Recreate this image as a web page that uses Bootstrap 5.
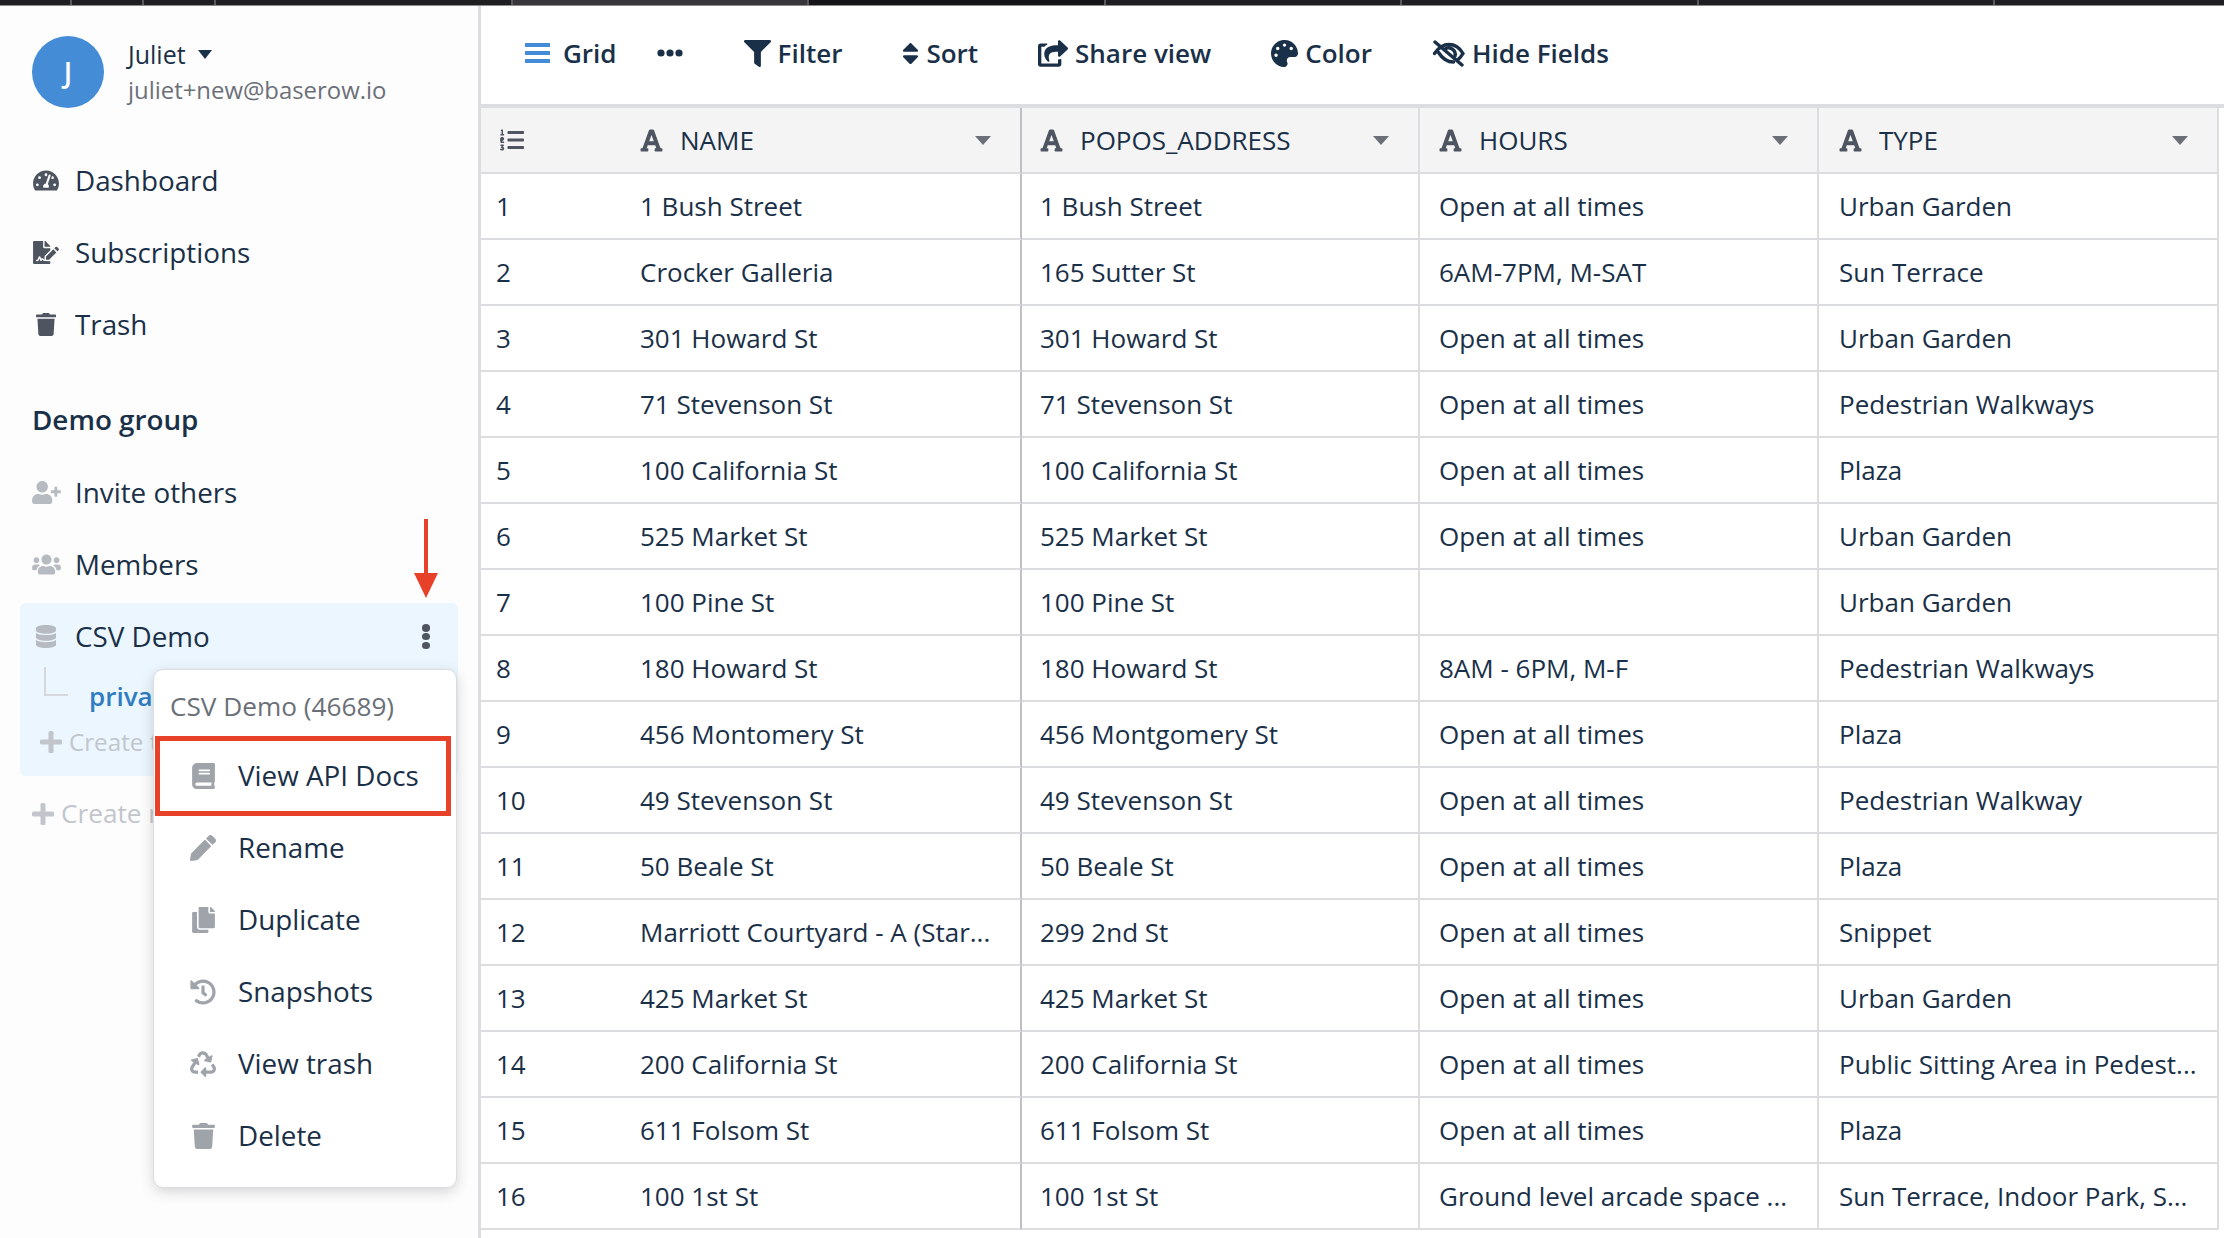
<!DOCTYPE html>
<html lang="en">
<head>
    <meta charset="UTF-8">
    <meta name="viewport" content="width=device-width, initial-scale=1.0">
    <title>Baserow - CSV Demo</title>
    <link href="https://cdn.jsdelivr.net/npm/bootstrap@5.3.0/dist/css/bootstrap.min.css" rel="stylesheet">
    <style>
        html, body {
            height: 100%;
            overflow: hidden;
        }
        body {
            font-family: "Open Sans", "Noto Sans", sans-serif;
            font-size: 26px;
            color: #1a3048;
            background-color: #fff;
        }
        .app-frame {
            height: 1238px;
        }
        /* browser tabs strip along the top edge */
        .tab-strip {
            height: 6px;
            background-color: #1f1f21;
            border-bottom: 1px solid #8d8d8f;
            flex-shrink: 0;
        }
        .tab-strip div {
            border-right: 2px solid #5a5a5c;
        }
        .tab-s { width: 72px; }
        .tab-l { width: 296.5px; }
        .tab-on { background-color: #38363a; }
        .tab-off { background-color: #151517; }

        .side-panel {
            width: 481px;
            flex-shrink: 0;
            background-color: #fdfdfd;
            border-right: 3px solid #dcdde1;
            padding: 30px 20px 0 20px;
        }
        .user-avatar {
            width: 72px;
            height: 72px;
            margin-left: 12px;
            background-color: #448dd6;
            color: #fff;
            font-size: 28px;
            font-weight: 600;
        }
        .user-name {
            font-size: 25px;
            line-height: 36px;
        }
        .user-mail {
            font-size: 23.9px;
            line-height: 36px;
            color: #6b7078;
        }
        .caret-down {
            display: inline-block;
            border-left: 7.5px solid transparent;
            border-right: 7.5px solid transparent;
            border-top: 9px solid #1a3048;
            margin-left: 12px;
            vertical-align: 5px;
        }
        .side-links {
            margin-top: 36px;
        }
        .side-link {
            height: 72px;
            padding-left: 12px;
            line-height: 72px;
            font-size: 27.8px;
        }
        .side-link svg {
            flex-shrink: 0;
        }
        .side-ico {
            width: 28px;
            margin-right: 15px;
            display: flex;
            justify-content: center;
            align-items: center;
        }
        .ico-dark { fill: #4f5560; }
        .ico-light { fill: #b6bac1; }
        .ico-mid { fill: #9fa3aa; }
        .ico-navy { fill: #1a3048; }
        .group-title {
            font-size: 27.8px;
            font-weight: 600;
            padding-left: 12px;
            margin-top: 29px;
            margin-bottom: 7px;
            line-height: 60px;
        }
        .db-block {
            height: 173px;
            margin-top: 3px;
            background-color: #ebf6ff;
            border-radius: 6px;
            position: relative;
        }
        .db-block .side-link {
            height: 66px;
            line-height: 66px;
        }
        .db-dots {
            position: absolute;
            right: 28px;
            top: 21px;
            width: 8px;
            height: 25px;
            display: flex;
            flex-direction: column;
            justify-content: space-between;
        }
        .db-dots span {
            width: 8px;
            height: 7.5px;
            border-radius: 50%;
            background-color: #4f5560;
        }
        .table-link {
            padding-left: 24px;
            height: 56px;
            margin-top: -1px;
            font-weight: 600;
            color: #2f7cc1;
            white-space: nowrap;
        }
        .tree-corner {
            width: 24px;
            height: 29px;
            border-left: 2px solid #d5d7db;
            border-bottom: 2px solid #d5d7db;
            margin-right: 21px;
            margin-top: -29px;
            flex-shrink: 0;
        }
        .create-link {
            color: #c2c6cc;
            white-space: nowrap;
        }
        .create-table {
            padding-left: 20px;
            font-size: 24.2px;
        }
        .create-new {
            margin-top: 18px;
            padding-left: 12px;
            font-size: 26.2px;
        }
        .create-link svg {
            margin-right: 7px;
            fill: #c2c6cc;
            flex-shrink: 0;
        }
        /* red arrow pointing at the dots */
        .note-arrow {
            position: absolute;
            left: 414px;
            top: 519px;
        }
        .db-menu {
            position: absolute;
            left: 153px;
            top: 669px;
            width: 304px;
            height: 519px;
            background-color: #fff;
            border: 1px solid #dcdde1;
            border-radius: 10px;
            box-shadow: 0 4px 14px rgba(0, 0, 0, .16);
        }
        .db-menu-head {
            padding: 18px 0 0 16px;
            height: 66px;
            font-size: 26.2px;
            line-height: 36px;
            color: #6b7078;
            white-space: nowrap;
        }
        .db-menu-row {
            height: 72px;
            padding-left: 36px;
            font-size: 27.8px;
        }
        .db-menu-row .side-ico {
            width: 26px;
            margin-right: 22px;
        }
        .db-menu-row.boxed {
            width: 296px;
            height: 80px;
            margin-left: 1px;
            margin-bottom: -4px;
            padding-left: 30px;
            border: 5px solid #e8412a;
        }

        .grid-panel {
            min-width: 0;
        }
        .view-bar {
            height: 102px;
            padding-left: 44px;
            padding-bottom: 4px;
            font-weight: 600;
            font-size: 26px;
            flex-shrink: 0;
            border-bottom: 4px solid #dcdde1;
        }
        .view-bar svg {
            margin-right: 7px;
        }
        .view-item {
            margin-right: 60px;
        }
        .view-item.item-grid {
            margin-right: 40px;
        }
        .view-item.item-grid svg {
            margin-right: 13px;
        }
        .view-item.item-dots {
            margin-right: 54px;
        }
        .grid-table {
            table-layout: fixed;
            width: 1738px;
            border-collapse: separate;
            border-spacing: 0;
        }
        .grid-table th, .grid-table td {
            height: 66px;
            padding: 0 15px 0 19px;
            font-weight: 400;
            border-bottom: 2px solid #dcdde1;
            border-right: 2px solid #dcdde1;
            white-space: nowrap;
            overflow: hidden;
            text-overflow: ellipsis;
            vertical-align: middle;
            color: #1a3048;
        }
        .grid-table th {
            background-color: #f4f4f4;
            font-size: 26px;
        }
        .grid-table .col-left {
            padding-left: 15px;
            padding-right: 0;
            border-right: 0;
        }
        .grid-table .col-name {
            padding-left: 17px;
            border-right: 2px solid #bcbfc5;
        }
        .grid-table .col-addr {
            padding-left: 18px;
        }
        .grid-table .col-type {
            padding-left: 20px;
        }
        .col-id { width: 142px; }
        .col-w-name { width: 399px; }
        .col-w-addr { width: 398px; }
        .col-w-hours { width: 399px; }
        .col-w-type { width: 400px; }
        .head-cell {
            justify-content: space-between;
        }
        .head-cell svg {
            margin-right: 17px;
        }
        .head-caret {
            border-left: 8px solid transparent;
            border-right: 8px solid transparent;
            border-top: 9px solid #6b7078;
            margin-right: 14px;
        }
        .row-count-ico {
            margin-left: 3px;
        }
    </style>
</head>
<body>
    <svg width="0" height="0" class="position-absolute">
        <defs>
            <symbol id="i-gauge" viewBox="0 0 576 512"><path d="M288 32C128.94 32 0 160.94 0 320c0 52.8 14.25 102.26 39.06 144.8 5.61 9.62 16.3 15.2 27.44 15.2h443c11.14 0 21.83-5.58 27.44-15.2C561.75 422.26 576 372.8 576 320c0-159.06-128.94-288-288-288zm0 64c14.71 0 26.58 10.13 30.32 23.65-1.11 2.26-2.64 4.23-3.45 6.67l-9.22 27.67c-5.13 3.49-10.97 6.01-17.64 6.01-17.67 0-32-14.33-32-32S270.33 96 288 96zM96 384c-17.67 0-32-14.33-32-32s14.33-32 32-32 32 14.33 32 32-14.33 32-32 32zm48-160c-17.67 0-32-14.33-32-32s14.33-32 32-32 32 14.33 32 32-14.33 32-32 32zm246.77-72.41l-61.33 184C343.13 347.33 352 364.54 352 384c0 11.72-3.38 22.55-8.88 32H232.88c-5.5-9.45-8.88-20.28-8.88-32 0-33.94 26.5-61.43 59.9-63.59l61.34-184.01c4.17-12.56 17.73-19.45 30.36-15.17 12.57 4.19 19.35 17.79 15.17 30.36zm14.66 57.2l15.52-46.55c3.47-1.29 7.13-2.23 11.05-2.23 17.67 0 32 14.33 32 32s-14.33 32-32 32c-11.38-.01-20.89-6.28-26.57-15.22zM480 384c-17.67 0-32-14.33-32-32s14.33-32 32-32 32 14.33 32 32-14.33 32-32 32z"/></symbol>
            <symbol id="i-sign" viewBox="0 0 576 512"><path d="M218.17 424.14c-2.95-5.92-8.09-6.52-10.17-6.52s-7.22.59-10.02 6.19l-7.67 15.34c-6.37 12.78-25.03 11.37-29.48-2.09L144 386.59l-10.61 31.88c-5.89 17.66-22.38 29.53-41 29.53H80c-8.84 0-16-7.16-16-16s7.16-16 16-16h12.39c4.83 0 9.11-3.08 10.64-7.66l18.19-54.64c3.3-9.81 12.44-16.41 22.78-16.41s19.48 6.59 22.77 16.41l13.88 41.64c19.75-16.19 54.06-9.7 66 14.16 1.89 3.78 5.49 5.95 9.36 6.26v-82.12l128-127.09V160H248c-13.2 0-24-10.8-24-24V0H24C10.7 0 0 10.7 0 24v464c0 13.3 10.7 24 24 24h336c13.3 0 24-10.7 24-24v-40l-128-.11c-16.12-.31-30.58-9.28-37.83-23.75zM384 121.9c0-6.3-2.5-12.4-7-16.9L279.1 7c-4.5-4.5-10.6-7-17-7H256v128h128v-6.1zm-96 225.06V416h68.99l161.68-162.78-67.88-67.88L288 346.96zm280.54-179.63l-31.87-31.87c-9.94-9.94-26.07-9.94-36.01 0l-27.25 27.25 67.88 67.88 27.25-27.25c9.95-9.94 9.95-26.07 0-36.01z"/></symbol>
            <symbol id="i-trash" viewBox="0 0 448 512"><path d="M432 32H312l-9.4-18.7A24 24 0 0 0 281.1 0H166.8a23.72 23.72 0 0 0-21.4 13.3L136 32H16A16 16 0 0 0 0 48v32a16 16 0 0 0 16 16h416a16 16 0 0 0 16-16V48a16 16 0 0 0-16-16zM53.2 467a48 48 0 0 0 47.9 45h245.8a48 48 0 0 0 47.9-45L416 128H32z"/></symbol>
            <symbol id="i-user-plus" viewBox="0 0 640 512"><path d="M624 208h-64v-64c0-8.8-7.2-16-16-16h-32c-8.8 0-16 7.2-16 16v64h-64c-8.8 0-16 7.2-16 16v32c0 8.8 7.2 16 16 16h64v64c0 8.8 7.2 16 16 16h32c8.8 0 16-7.2 16-16v-64h64c8.8 0 16-7.2 16-16v-32c0-8.8-7.2-16-16-16zm-400 48c70.7 0 128-57.3 128-128S294.7 0 224 0 96 57.3 96 128s57.3 128 128 128zm89.6 32h-16.7c-22.2 10.2-46.9 16-72.9 16s-50.6-5.8-72.9-16h-16.7C60.2 288 0 348.2 0 422.4V464c0 26.5 21.5 48 48 48h352c26.5 0 48-21.5 48-48v-41.6c0-74.2-60.2-134.4-134.4-134.4z"/></symbol>
            <symbol id="i-users" viewBox="0 0 640 512"><path d="M96 224c35.3 0 64-28.7 64-64s-28.7-64-64-64-64 28.7-64 64 28.7 64 64 64zm448 0c35.3 0 64-28.7 64-64s-28.7-64-64-64-64 28.7-64 64 28.7 64 64 64zm32 32h-64c-17.6 0-33.5 7.1-45.1 18.6 40.3 22.1 68.9 62 75.1 109.4h66c17.7 0 32-14.3 32-32v-32c0-35.3-28.7-64-64-64zm-256 0c61.9 0 112-50.1 112-112S381.9 32 320 32 208 82.1 208 144s50.1 112 112 112zm76.8 32h-8.3c-20.8 10-43.9 16-68.5 16s-47.6-6-68.5-16h-8.3C179.6 288 128 339.6 128 403.2V432c0 26.5 21.5 48 48 48h288c26.5 0 48-21.5 48-48v-28.8c0-63.6-51.6-115.2-115.2-115.2zm-223.7-13.4C161.5 263.1 145.6 256 128 256H64c-35.3 0-64 28.7-64 64v32c0 17.7 14.3 32 32 32h65.9c6.3-47.4 34.9-87.3 75.2-109.4z"/></symbol>
            <symbol id="i-db" viewBox="0 0 448 512"><path d="M448 73.143v45.714C448 159.143 347.667 192 224 192S0 159.143 0 118.857V73.143C0 32.857 100.333 0 224 0s224 32.857 224 73.143zM448 176v102.857C448 319.143 347.667 352 224 352S0 319.143 0 278.857V176c48.125 33.143 136.208 48.572 224 48.572S399.874 209.143 448 176zm0 160v102.857C448 479.143 347.667 512 224 512S0 479.143 0 438.857V336c48.125 33.143 136.208 48.572 224 48.572S399.874 369.143 448 336z"/></symbol>
            <symbol id="i-book" viewBox="0 0 448 512"><path d="M448 360V24c0-13.3-10.7-24-24-24H96C43 0 0 43 0 96v320c0 53 43 96 96 96h328c13.3 0 24-10.7 24-24v-16c0-7.5-3.5-14.3-8.9-18.7-4.2-15.4-4.2-59.3 0-74.7 5.4-4.3 8.9-11.1 8.9-18.6zM128 134c0-3.3 2.7-6 6-6h212c3.3 0 6 2.7 6 6v20c0 3.3-2.7 6-6 6H134c-3.3 0-6-2.7-6-6v-20zm0 64c0-3.3 2.7-6 6-6h212c3.3 0 6 2.7 6 6v20c0 3.3-2.7 6-6 6H134c-3.3 0-6-2.7-6-6v-20zm253.4 250H96c-17.7 0-32-14.3-32-32 0-17.6 14.4-32 32-32h285.4c-1.9 17.1-1.9 46.9 0 64z"/></symbol>
            <symbol id="i-pencil" viewBox="0 0 512 512"><path d="M497.9 142.1l-46.1 46.1c-4.7 4.7-12.3 4.7-17 0l-111-111c-4.7-4.7-4.7-12.3 0-17l46.1-46.1c18.7-18.7 49.1-18.7 67.9 0l60.1 60.1c18.8 18.7 18.8 49.1 0 67.9zM284.2 99.8L21.6 362.4.4 483.9c-2.9 16.4 11.4 30.6 27.8 27.8l121.5-21.3 262.6-262.6c4.7-4.7 4.7-12.3 0-17l-111-111c-4.8-4.7-12.4-4.7-17.1 0z"/></symbol>
            <symbol id="i-copy" viewBox="0 0 448 512"><path d="M320 448v40c0 13.255-10.745 24-24 24H24c-13.255 0-24-10.745-24-24V120c0-13.255 10.745-24 24-24h72v296c0 30.879 25.121 56 56 56h168zm0-344V0H152c-13.255 0-24 10.745-24 24v368c0 13.255 10.745 24 24 24h272c13.255 0 24-10.745 24-24V128H344c-13.2 0-24-10.8-24-24zm120.971-31.029L375.029 7.029A24 24 0 0 0 358.059 0H352v96h96v-6.059a24 24 0 0 0-7.029-16.97z"/></symbol>
            <symbol id="i-history" viewBox="0 0 512 512"><path d="M504 255.531c.253 136.64-111.18 248.372-247.82 248.468-59.015.042-113.223-20.53-155.822-54.911-11.077-8.94-11.905-25.541-1.839-35.607l11.267-11.267c8.609-8.609 22.353-9.551 31.891-1.984C173.062 425.135 212.781 440 256 440c101.705 0 184-82.311 184-184 0-101.705-82.311-184-184-184-48.814 0-93.149 18.969-126.068 49.932l50.754 50.754c10.08 10.08 2.941 27.314-11.313 27.314H24c-8.837 0-16-7.163-16-16V38.627c0-14.254 17.234-21.393 27.314-11.314l49.372 49.372C129.209 34.136 189.552 8 256 8c136.81 0 247.747 110.78 248 247.531zm-180.912 78.784l9.823-12.63c8.138-10.463 6.253-25.542-4.21-33.679L288 256.349V152c0-13.255-10.745-24-24-24h-16c-13.255 0-24 10.745-24 24v135.651l65.409 50.874c10.463 8.137 25.541 6.253 33.679-4.21z"/></symbol>
            <symbol id="i-recycle" viewBox="0 0 512 512"><path d="M184.561 261.903c3.232 13.997-12.123 24.635-24.068 17.168l-40.736-25.455-50.867 81.402C55.606 356.273 70.96 384 96.012 384H148c6.627 0 12 5.373 12 12v40c0 6.627-5.373 12-12 12H96.115c-75.334 0-121.302-83.048-81.408-146.88l50.822-81.388-40.725-25.448c-12.081-7.547-8.966-25.961 4.879-29.158l110.237-25.45c8.611-1.988 17.201 3.381 19.189 11.99l25.452 110.237zm98.561-182.915l41.289 66.076-40.74 25.457c-12.051 7.528-9 25.953 4.879 29.158l110.237 25.45c8.672 1.999 17.215-3.438 19.189-11.99l25.45-110.237c3.197-13.844-11.99-24.719-24.068-17.168l-40.687 25.424-41.263-66.082C297.074-10.286 202.918-9.5 165.124 51.015l-22.634 36.24c-3.51 5.62-1.8 13.019 3.82 16.53l33.931 21.19c5.62 3.51 13.019 1.8 16.53-3.82l22.634-36.24c12.506-20.017 41.876-19.8 54.017.073zM497.288 301.12l-27.365-43.837c-3.51-5.62-10.909-7.33-16.53-3.82l-33.931 21.19c-5.62 3.51-7.33 10.909-3.82 16.53l27.377 43.812C456.394 356.304 441.006 384 415.987 384H320v-48c0-14.214-17.23-21.403-27.314-11.314l-80 80c-6.248 6.248-6.248 16.379 0 22.627l80 80C302.689 517.316 320 510.216 320 496v-48h95.88c75.274 0 121.335-82.997 81.408-146.88z"/></symbol>
            <symbol id="i-filter" viewBox="0 0 512 512"><path d="M487.976 0H24.028C2.71 0-8.047 25.866 7.058 40.971L192 225.941V432c0 7.831 3.821 15.17 10.237 19.662l80 55.98C298.02 518.69 320 507.493 320 487.98V225.941l184.947-184.97C520.021 25.896 509.338 0 487.976 0z"/></symbol>
            <symbol id="i-sort" viewBox="0 0 320 512"><path d="M41 288h238c21.4 0 32.1 25.9 17 41L177 448c-9.4 9.4-24.6 9.4-33.9 0L24 329c-15.1-15.1-4.4-41 17-41zm255-105L177 64c-9.4-9.4-24.6-9.4-33.9 0L24 183c-15.1 15.1-4.4 41 17 41h238c21.4 0 32.1-25.9 17-41z"/></symbol>
            <symbol id="i-share" viewBox="0 0 576 512"><path d="M568.482 177.448L424.479 313.433C409.3 327.768 384 317.14 384 295.985v-71.963c-144.575.97-205.566 35.113-164.775 171.353 4.483 14.973-12.846 26.567-25.006 17.33C155.252 383.105 120 326.488 120 269.339c0-143.937 117.599-172.5 264-173.312V24.012c0-21.174 25.317-31.768 40.479-17.448l144.003 135.988c10.02 9.463 10.028 25.425 0 34.896zM384 379.128V448H64V128h50.916a11.99 11.99 0 0 0 8.646-3.683c14.953-15.59 32.237-27.931 51.007-37.78C186.708 80.17 182.213 64 168.503 64H48C21.49 64 0 85.49 0 112v352c0 26.51 21.49 48 48 48h352c26.51 0 48-21.49 48-48v-88.806c0-8.288-8.197-14.066-16.011-11.302a71.83 71.83 0 0 1-34.189 3.377c-7.27-1.046-13.8 4.514-13.8 11.859z"/></symbol>
            <symbol id="i-palette" viewBox="0 0 512 512"><path d="M204.3 5C104.9 24.4 24.8 104.3 5.2 203.4c-37 187 131.7 326.4 258.8 306.7 41.2-6.4 61.4-54.6 42.5-91.7-23.1-45.4 9.9-98.4 60.9-98.4h79.7c35.8 0 64.8-29.6 64.9-65.3C511.5 97.1 368.1-26.9 204.3 5zM96 320c-17.7 0-32-14.3-32-32s14.3-32 32-32 32 14.3 32 32-14.3 32-32 32zm32-128c-17.7 0-32-14.3-32-32s14.3-32 32-32 32 14.3 32 32-14.3 32-32 32zm128-64c-17.7 0-32-14.3-32-32s14.3-32 32-32 32 14.3 32 32-14.3 32-32 32zm128 64c-17.7 0-32-14.3-32-32s14.3-32 32-32 32 14.3 32 32-14.3 32-32 32z"/></symbol>
            <symbol id="i-font" viewBox="0 0 448 512"><path d="M432 416h-23.41L277.88 53.69A32 32 0 0 0 247.58 32h-47.16a32 32 0 0 0-30.3 21.69L39.41 416H16a16 16 0 0 0-16 16v32a16 16 0 0 0 16 16h128a16 16 0 0 0 16-16v-32a16 16 0 0 0-16-16h-19.58l23.3-64h152.56l23.3 64H304a16 16 0 0 0-16 16v32a16 16 0 0 0 16 16h128a16 16 0 0 0 16-16v-32a16 16 0 0 0-16-16zM176.85 272L224 142.51 271.15 272z"/></symbol>
            <symbol id="i-list" viewBox="0 0 512 512"><path d="M61.77 401l17.5-20.15a19.92 19.92 0 0 0 5.07-14.19v-3.31C84.34 356 80.5 352 73 352H16a8 8 0 0 0-8 8v16a8 8 0 0 0 8 8h22.83a157.41 157.41 0 0 0-11 12.31l-5.61 7c-4 5.07-5.25 10.13-2.8 14.88l1.05 1.93c3 5.76 6.29 7.88 12.25 7.88h4.73c10.33 0 15.94 2.44 15.94 9.09 0 4.72-4.2 8.22-14.36 8.22a41.54 41.54 0 0 1-15.47-3.12c-6.49-3.88-11.74-3.5-15.6 3.12l-5.59 9.31c-3.72 6.13-3.19 11.72 2.63 15.94 7.71 4.69 20.38 9.44 37 9.44 34.16 0 48.5-22.75 48.5-44.12-.03-14.38-9.12-29.76-28.73-34.88zM496 224H176a16 16 0 0 0-16 16v32a16 16 0 0 0 16 16h320a16 16 0 0 0 16-16v-32a16 16 0 0 0-16-16zm0-160H176a16 16 0 0 0-16 16v32a16 16 0 0 0 16 16h320a16 16 0 0 0 16-16V80a16 16 0 0 0-16-16zm0 320H176a16 16 0 0 0-16 16v32a16 16 0 0 0 16 16h320a16 16 0 0 0 16-16v-32a16 16 0 0 0-16-16zM16 160h64a8 8 0 0 0 8-8v-16a8 8 0 0 0-8-8H64V40a8 8 0 0 0-8-8H32a8 8 0 0 0-7.14 4.42l-8 16A8 8 0 0 0 24 64h8v64H16a8 8 0 0 0-8 8v16a8 8 0 0 0 8 8zm-3.91 160H80a8 8 0 0 0 8-8v-16a8 8 0 0 0-8-8H41.32c3.29-10.29 48.34-18.68 48.34-56.44 0-29.06-25-39.56-44.47-39.56-21.36 0-33.8 10-40.46 18.75-4.37 5.59-3 10.84 2.8 15.37l8.58 6.88c5.61 4.56 11 2.47 16.12-2.44a13.44 13.44 0 0 1 9.46-3.84c3.33 0 9.28 1.56 9.28 8.75C51 200.6 0 210.6 0 268v4c0 9 6.09 16 12.09 16z"/></symbol>
            <symbol id="i-plus" viewBox="0 0 22 22"><rect x="8.500" width="5" height="22" rx="1.500"/><rect y="8.500" width="22" height="5" rx="1.500"/></symbol>
        </defs>
    </svg>

    <div class="app-frame d-flex flex-column position-relative">
        <div class="tab-strip d-flex">
            <div class="tab-s"></div>
            <div class="tab-s"></div>
            <div class="tab-s"></div>
            <div class="tab-l"></div>
            <div class="tab-l tab-on"></div>
            <div class="tab-l tab-off"></div>
            <div class="tab-l"></div>
            <div class="tab-l"></div>
            <div class="tab-l"></div>
        </div>
        <div class="d-flex flex-grow-1 overflow-hidden">
            <aside class="side-panel">
                <div class="d-flex align-items-center">
                    <div class="user-avatar rounded-circle d-flex align-items-center justify-content-center flex-shrink-0">J</div>
                    <div class="ms-4">
                        <div class="user-name">Juliet<span class="caret-down"></span></div>
                        <div class="user-mail">juliet+new@baserow.io</div>
                    </div>
                </div>
                <div class="side-links">
                    <div class="side-link d-flex align-items-center"><span class="side-ico"><svg width="26" height="23" class="ico-dark"><use href="#i-gauge"/></svg></span>Dashboard</div>
                    <div class="side-link d-flex align-items-center"><span class="side-ico"><svg width="26" height="23" class="ico-dark"><use href="#i-sign"/></svg></span>Subscriptions</div>
                    <div class="side-link d-flex align-items-center"><span class="side-ico"><svg width="20" height="23" class="ico-dark"><use href="#i-trash"/></svg></span>Trash</div>
                </div>
                <div class="group-title">Demo group</div>
                <div class="side-link d-flex align-items-center"><span class="side-ico"><svg width="29" height="23" class="ico-light"><use href="#i-user-plus"/></svg></span>Invite others</div>
                <div class="side-link d-flex align-items-center"><span class="side-ico"><svg width="29" height="23" class="ico-light"><use href="#i-users"/></svg></span>Members</div>
                <div class="db-block">
                    <div class="side-link d-flex align-items-center"><span class="side-ico"><svg width="20" height="23" class="ico-light"><use href="#i-db"/></svg></span>CSV Demo</div>
                    <div class="db-dots"><span></span><span></span><span></span></div>
                    <div class="table-link d-flex align-items-center"><span class="tree-corner"></span>private</div>
                    <div class="create-link create-table d-flex align-items-center"><svg width="22" height="22"><use href="#i-plus"/></svg>Create table</div>
                </div>
                <div class="create-link create-new d-flex align-items-center"><svg width="22" height="22"><use href="#i-plus"/></svg>Create new</div>
            </aside>

            <main class="grid-panel flex-grow-1 d-flex flex-column">
                <div class="view-bar d-flex align-items-center">
                    <div class="view-item item-grid d-flex align-items-center">
                        <svg width="25" height="22" viewBox="0 0 25 22" fill="#448dd6"><rect width="25" height="4" y="1"/><rect width="25" height="4" y="9"/><rect width="25" height="4" y="17"/></svg>
                        <span>Grid</span>
                    </div>
                    <div class="view-item item-dots d-flex align-items-center">
                        <svg width="26" height="8" viewBox="0 0 26 8" class="ico-navy"><circle cx="4" cy="4" r="3.6"/><circle cx="13" cy="4" r="3.6"/><circle cx="22" cy="4" r="3.6"/></svg>
                    </div>
                    <div class="view-item d-flex align-items-center">
                        <svg width="27" height="27" class="ico-navy"><use href="#i-filter"/></svg>Filter
                    </div>
                    <div class="view-item d-flex align-items-center">
                        <svg width="17" height="27" class="ico-navy"><use href="#i-sort"/></svg>Sort
                    </div>
                    <div class="view-item d-flex align-items-center">
                        <svg width="30" height="27" class="ico-navy"><use href="#i-share"/></svg>Share view
                    </div>
                    <div class="view-item d-flex align-items-center">
                        <svg width="27" height="27" class="ico-navy"><use href="#i-palette"/></svg>Color
                    </div>
                    <div class="view-item d-flex align-items-center">
                        <svg width="33" height="27" viewBox="0 0 33 27" fill="none" stroke="#1a3048" stroke-width="3.4" stroke-linecap="round"><path d="M2.500 13.500C7 7 12 4.500 17 4.500c5.500 0 10.500 3 14 9-1.500 2.600-3.300 4.700-5.200 6.300"/><path d="M6.500 12.500c3.500 5.500 7.800 9.500 15 9.500"/><path d="M12.500 9.500a6.500 6.500 0 0 1 10.500 6.500"/><path d="M3 2l27 23"/></svg>Hide Fields
                    </div>
                </div>
                <div class="flex-grow-1 overflow-hidden">
                    <table class="grid-table" id="gridTable">
                        <colgroup>
                            <col class="col-id"><col class="col-w-name"><col class="col-w-addr"><col class="col-w-hours"><col class="col-w-type">
                        </colgroup>
                        <thead>
                            <tr>
                                <th class="col-left"><svg width="26" height="24" class="ico-dark row-count-ico d-block"><use href="#i-list"/></svg></th>
                                <th class="col-name" id="headName"></th>
                                <th class="col-addr" id="headAddr"></th>
                                <th id="headHours"></th>
                                <th class="col-type" id="headType"></th>
                            </tr>
                        </thead>
                        <tbody id="gridRows"></tbody>
                    </table>
                </div>
            </main>
        </div>

        <svg class="note-arrow" width="24" height="80" viewBox="0 0 24 80" fill="#e8412a"><rect x="10" y="0" width="4" height="56"/><path d="M0 54h24L12 79z"/></svg>

        <div class="db-menu">
            <div class="db-menu-head">CSV Demo (46689)</div>
            <div class="db-menu-row boxed d-flex align-items-center"><span class="side-ico"><svg width="23" height="26" class="ico-mid"><use href="#i-book"/></svg></span>View API Docs</div>
            <div class="db-menu-row d-flex align-items-center"><span class="side-ico"><svg width="26" height="26" class="ico-mid"><use href="#i-pencil"/></svg></span>Rename</div>
            <div class="db-menu-row d-flex align-items-center"><span class="side-ico"><svg width="23" height="26" class="ico-mid"><use href="#i-copy"/></svg></span>Duplicate</div>
            <div class="db-menu-row d-flex align-items-center"><span class="side-ico"><svg width="26" height="26" class="ico-mid"><use href="#i-history"/></svg></span>Snapshots</div>
            <div class="db-menu-row d-flex align-items-center"><span class="side-ico"><svg width="26" height="26" class="ico-mid"><use href="#i-recycle"/></svg></span>View trash</div>
            <div class="db-menu-row d-flex align-items-center"><span class="side-ico"><svg width="23" height="26" class="ico-mid"><use href="#i-trash"/></svg></span>Delete</div>
        </div>
    </div>

    <script src="https://cdn.jsdelivr.net/npm/bootstrap@5.3.0/dist/js/bootstrap.bundle.min.js"></script>
    <script>
        const rows = [
            ['1 Bush Street', '1 Bush Street', 'Open at all times', 'Urban Garden'],
            ['Crocker Galleria', '165 Sutter St', '6AM-7PM, M-SAT', 'Sun Terrace'],
            ['301 Howard St', '301 Howard St', 'Open at all times', 'Urban Garden'],
            ['71 Stevenson St', '71 Stevenson St', 'Open at all times', 'Pedestrian Walkways'],
            ['100 California St', '100 California St', 'Open at all times', 'Plaza'],
            ['525 Market St', '525 Market St', 'Open at all times', 'Urban Garden'],
            ['100 Pine St', '100 Pine St', '', 'Urban Garden'],
            ['180 Howard St', '180 Howard St', '8AM - 6PM, M-F', 'Pedestrian Walkways'],
            ['456 Montomery St', '456 Montgomery St', 'Open at all times', 'Plaza'],
            ['49 Stevenson St', '49 Stevenson St', 'Open at all times', 'Pedestrian Walkway'],
            ['50 Beale St', '50 Beale St', 'Open at all times', 'Plaza'],
            ['Marriott Courtyard - A (Star...', '299 2nd St', 'Open at all times', 'Snippet'],
            ['425 Market St', '425 Market St', 'Open at all times', 'Urban Garden'],
            ['200 California St', '200 California St', 'Open at all times', 'Public Sitting Area in Pedest...'],
            ['611 Folsom St', '611 Folsom St', 'Open at all times', 'Plaza'],
            ['100 1st St', '100 1st St', 'Ground level arcade space ...', 'Sun Terrace, Indoor Park, S...'],
        ];

        function headCell(id, label) {
            document.getElementById(id).innerHTML =
                `<div class="head-cell d-flex align-items-center">
                    <div class="d-flex align-items-center"><svg width="23" height="25" class="ico-dark"><use href="#i-font"/></svg>${label}</div>
                    <span class="head-caret"></span>
                </div>`;
        }
        headCell('headName', 'NAME');
        headCell('headAddr', 'POPOS_ADDRESS');
        headCell('headHours', 'HOURS');
        headCell('headType', 'TYPE');

        document.getElementById('gridRows').innerHTML = rows.map((r, i) =>
            `<tr><td class="col-left">${i + 1}</td><td class="col-name">${r[0]}</td><td class="col-addr">${r[1]}</td><td>${r[2]}</td><td class="col-type">${r[3]}</td></tr>`
        ).join('');
    </script>
</body>
</html>
